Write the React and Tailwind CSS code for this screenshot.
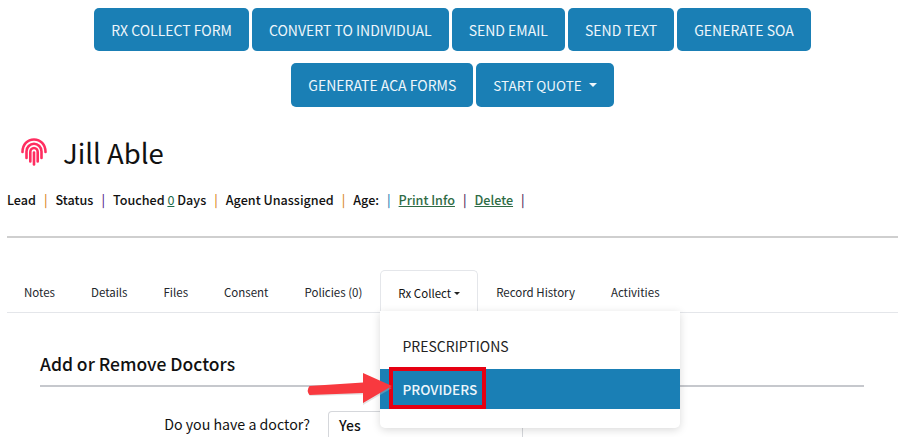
import React from "react";

const Sep = ({ c }) => <span className={`mx-[8px] ${c}`}>|</span>;

function Btn({ children, className = "" }) {
  return (
    <div className={`flex items-center rounded-[5px] bg-[#1a7fb5] px-[17px] text-[14px] leading-[24px] text-[#eef6fb] ${className}`}>
      {children}
    </div>
  );
}

function Tab({ children, active, first }) {
  return (
    <div
      className={
        active
          ? "-mb-px flex h-[43px] items-center rounded-t-[5px] border border-b-0 border-[#e4e6ea] bg-white px-[17px] pt-[3px]"
          : first
            ? "flex h-[42px] items-center pl-[17px] pr-[18px] pt-[3px] text-[#22262b]"
            : "flex h-[42px] items-center px-[18px] pt-[3px] text-[#22262b]"
      }
    >
      {children}
    </div>
  );
}

function Fingerprint() {
  return (
    <svg width="26" height="28" viewBox="0 0 26 28" fill="none" stroke="#ff2d60" strokeWidth="2.6" strokeLinecap="round">
      <path d="M1.5 14 C1.5 6.5 6.5 1.5 13 1.5 C19.5 1.5 24.5 6.5 24.5 14" />
      <path d="M5.5 20 V13.5 C5.5 9 9 5.8 13 5.8 C17 5.8 20.5 9 20.5 13.5 V20" />
      <path d="M9.3 23.5 V14 C9.3 11.8 11 10 13 10 C15 10 16.7 11.8 16.7 14 V23.5" />
      <path d="M13 14.5 V26.5" />
    </svg>
  );
}

export default function App() {
  return (
    <div
      className="relative h-[437px] w-[905px] overflow-hidden bg-white text-[#111]"
      style={{ fontFamily: '"Noto Sans CJK SC", "Noto Sans", sans-serif' }}
    >
      <div className="flex flex-col items-center gap-[12px] pt-[8px]">
        <div className="flex h-[43px] gap-[3px]">
          <Btn>RX COLLECT FORM</Btn>
          <Btn>CONVERT TO INDIVIDUAL</Btn>
          <Btn>SEND EMAIL</Btn>
          <Btn>SEND TEXT</Btn>
          <Btn>GENERATE SOA</Btn>
        </div>
        <div className="flex h-[44px] gap-[3px]">
          <Btn>GENERATE ACA FORMS</Btn>
          <Btn>
            <span className="text-[13.5px]">START QUOTE</span>
            <span className="ml-[7px] h-0 w-0 border-x-[4px] border-t-[4px] border-x-transparent border-t-[#eef6fb]" />
          </Btn>
        </div>
      </div>

      <div className="mt-[26px] flex h-[38px] items-center pl-[21px]">
        <Fingerprint />
        <h1 className="ml-[16px] text-[27.5px] font-normal leading-[38px]">Jill Able</h1>
      </div>

      <div className="mt-[18px] flex h-[22px] items-center whitespace-pre pl-[7px] text-[12.6px] font-medium text-[#111]">
        <span>Lead</span>
        <Sep c="text-[#d98a2b]" />
        <span>Status</span>
        <Sep c="text-[#5b2d8c]" />
        <span>
          Touched <span className="font-normal text-[#1d6b4a] underline">0</span> Days
        </span>
        <Sep c="text-[#d98a2b]" />
        <span>Agent Unassigned</span>
        <Sep c="text-[#d98a2b]" />
        <span>Age:</span>
        <Sep c="text-[#2a7fb5]" />
        <span className="text-[#2f6b45] underline">Print Info</span>
        <Sep c="text-[#4b1f5c]" />
        <span className="text-[#2f6b45] underline">Delete</span>
        <Sep c="text-[#4b1f5c]" />
      </div>

      <div className="ml-[7px] mt-[25px] h-[2px] w-[891px] bg-[#cfcfcf]" />

      <div className="ml-[7px] mt-[32px] flex h-[43px] w-[891px] border-b border-[#e4e6ea] text-[11.5px]">
        <Tab first>Notes</Tab>
        <Tab>Details</Tab>
        <Tab>Files</Tab>
        <Tab>Consent</Tab>
        <Tab>Policies (0)</Tab>
        <Tab active>
          Rx Collect
          <span className="ml-[3px] h-0 w-0 border-x-[3.5px] border-t-[3.5px] border-x-transparent border-t-[#222]" />
        </Tab>
        <Tab>Record History</Tab>
        <Tab>Activities</Tab>
      </div>

      <div className="ml-[40px] mt-[38px] w-[824px] border-b-2 border-[#c6c8cd] pb-[8px] text-[17.5px] font-medium leading-[26px]">
        Add or Remove Doctors
      </div>

      <div className="mt-[24px] flex">
        <div className="w-[310px] pt-[1px] text-right text-[14.2px] leading-[24px]">Do you have a doctor?</div>
        <div className="ml-[18px] flex h-[26px] w-[195px] rounded-t-[4px] border border-b-0 border-[#d5d7db] pl-[10px] pt-[1px] text-[14px] font-medium leading-[24px]">
          Yes
        </div>
      </div>

      <div className="absolute left-[380px] top-[311px] w-[300px] rounded-b-[5px] bg-white pb-[19px] pt-[15px] shadow-[0_2px_8px_rgba(0,0,0,0.15)]">
        <div className="flex h-[43px] items-center pb-[3px] pl-[22.5px] text-[14px] text-[#222]">PRESCRIPTIONS</div>
        <div className="flex h-[40px] items-center bg-[#1a7fb5] pl-[22.5px] text-[13.6px] font-medium text-[#eef6fb]">PROVIDERS</div>
      </div>

      <div className="absolute left-[389px] top-[367px] h-[42px] w-[97px] border-[4px] border-[#e60012]" />

      <svg className="absolute left-[305px] top-[370px]" width="90" height="38" viewBox="0 0 90 38">
        <path d="M5 26 L58 24.5 L58 35 L87 18 L58 5 L58 14.5 L5 17 Q1 21 5 26 Z" fill="#b9b9b9" opacity="0.4" />
        <path d="M4.5 16 L58 12.5 L58 3 L87 16 L58 33 L58 23 L4.5 25 Q1 20.5 4.5 16 Z" fill="#f8393f" />
      </svg>
    </div>
  );
}
